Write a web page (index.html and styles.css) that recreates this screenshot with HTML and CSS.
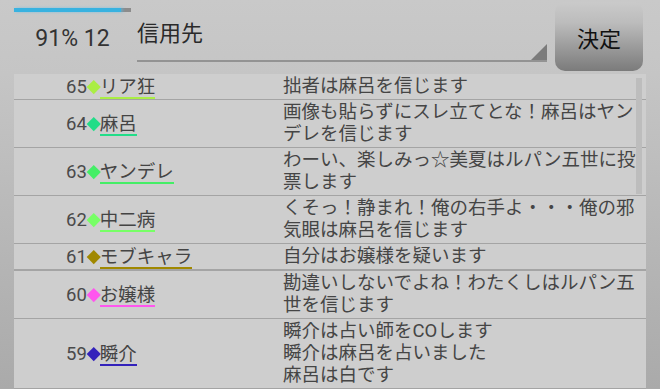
FILE: index.html
```html
<!DOCTYPE html>
<html lang="ja">
<head>
<meta charset="utf-8">
<title>信用先</title>
<link rel="stylesheet" href="styles.css">
</head>
<body>
<div class="screen">
  <header class="top">
    <div class="status">
      <div class="progress"><div class="progress-fill" style="width:91.5%"></div></div>
      <div class="count">91% 12</div>
    </div>
    <div class="spinner">
      <span class="spinner-text">信用先</span>
      <span class="spinner-arrow"></span>
    </div>
    <button class="decide">決定</button>
  </header>
  <div class="list">
    <div class="row">
      <div class="who"><span class="num">65</span><span class="dia c65"></span><span class="name c65">リア狂</span></div>
      <div class="msg">拙者は麻呂を信じます</div>
    </div>
    <div class="row">
      <div class="who"><span class="num">64</span><span class="dia c64"></span><span class="name c64">麻呂</span></div>
      <div class="msg">画像も貼らずにスレ立てとな！麻呂はヤン<br>デレを信じます</div>
    </div>
    <div class="row">
      <div class="who"><span class="num">63</span><span class="dia c63"></span><span class="name c63">ヤンデレ</span></div>
      <div class="msg">わーい、楽しみっ☆美夏はルパン五世に投<br>票します</div>
    </div>
    <div class="row">
      <div class="who"><span class="num">62</span><span class="dia c62"></span><span class="name c62">中二病</span></div>
      <div class="msg">くそっ！静まれ！俺の右手よ・・・俺の邪<br>気眼は麻呂を信じます</div>
    </div>
    <div class="row thick">
      <div class="who"><span class="num">61</span><span class="dia c61"></span><span class="name c61">モブキャラ</span></div>
      <div class="msg">自分はお嬢様を疑います</div>
    </div>
    <div class="row">
      <div class="who"><span class="num">60</span><span class="dia c60"></span><span class="name c60">お嬢様</span></div>
      <div class="msg">勘違いしないでよね！わたくしはルパン五<br>世を信じます</div>
    </div>
    <div class="row">
      <div class="who"><span class="num">59</span><span class="dia c59"></span><span class="name c59">瞬介</span></div>
      <div class="msg">瞬介は占い師をCOします<br>瞬介は麻呂を占いました<br>麻呂は白です</div>
    </div>
    <div class="scrollbar"></div>
  </div>
</div>
</body>
</html>
```
FILE: styles.css
```css
html, body {
  margin: 0;
  padding: 0;
}
body {
  width: 660px;
  height: 389px;
  overflow: hidden;
  font-family: Roboto, "Noto Sans CJK JP", sans-serif;
  background: linear-gradient(to bottom, #c9c9c9 0px, #c5c5c5 74px, #aaaaaa 389px);
}
.screen {
  display: flex;
  flex-direction: column;
  height: 389px;
}
.top {
  display: flex;
  align-items: flex-start;
  height: 74px;
  flex: none;
}
.status {
  width: 117px;
  padding: 8px 6px 0 14px;
  flex: none;
}
.progress {
  height: 4px;
  background: #8c8c8c;
}
.progress-fill {
  height: 4px;
  background: #38b2e0;
  box-shadow: 2px 0 3px rgba(80, 190, 240, 0.6);
}
.count {
  margin-top: 13px;
  text-align: center;
  font-size: 23px;
  line-height: 28px;
  color: #333;
}
.spinner {
  position: relative;
  width: 410px;
  margin-top: 19px;
  padding-bottom: 11px;
  border-bottom: 2px solid #939393;
  flex: none;
}
.spinner-text {
  display: block;
  font-size: 22px;
  line-height: 30px;
  color: #2a2a2a;
}
.spinner-arrow {
  position: absolute;
  right: 0;
  bottom: 0;
  width: 0;
  height: 0;
  border-left: 16px solid transparent;
  border-bottom: 16px solid #7b7b7b;
}
.decide {
  margin: 2px 0 0 8px;
  width: 88px;
  height: 69px;
  border: none;
  border-radius: 10px;
  background: linear-gradient(to bottom, #cacaca 0%, #bcbcbc 30%, #7b7b7b 100%);
  font-family: Roboto, "Noto Sans CJK JP", sans-serif;
  font-size: 22px;
  color: #111;
  padding: 0;
  flex: none;
}
.list {
  position: relative;
  flex: 1;
  margin: 0 14px;
  background: #cecece;
  overflow: hidden;
}
.row {
  display: flex;
  border-bottom: 1px solid #a4a4a4;
}
.row.thick {
  border-bottom-width: 2px;
}
.who {
  width: 217px;
  padding: 2px 0 0 52px;
  display: flex;
  align-items: center;
  flex: none;
}
.num {
  font-size: 18.5px;
  line-height: 20px;
  margin-bottom: 2px;
  color: #4a4a4a;
}
.dia {
  width: 9.5px;
  height: 9.5px;
  margin: 0 1.75px 2px;
  transform: rotate(45deg);
}
.name {
  font-size: 18.5px;
  line-height: 20px;
  color: #444;
  border-bottom: 2px solid;
}
.msg {
  flex: 1;
  padding: 1px 0 2px;
  font-size: 18.5px;
  line-height: 22px;
  color: #454545;
  white-space: nowrap;
}
.scrollbar {
  position: absolute;
  top: 4px;
  right: 4px;
  width: 6px;
  height: 116px;
  background: #bdbdbd;
}
.dia.c65 { background: #aaee44; }
.name.c65 { border-color: #aaee44; }
.dia.c64 { background: #22dd88; }
.name.c64 { border-color: #22dd88; }
.dia.c63 { background: #44ee66; }
.name.c63 { border-color: #44ee66; }
.dia.c62 { background: #77ff66; }
.name.c62 { border-color: #77ff66; }
.dia.c61 { background: #a08800; }
.name.c61 { border-color: #a08800; }
.dia.c60 { background: #ff55ee; }
.name.c60 { border-color: #ff55ee; }
.dia.c59 { background: #3322bb; }
.name.c59 { border-color: #3322bb; }
```
